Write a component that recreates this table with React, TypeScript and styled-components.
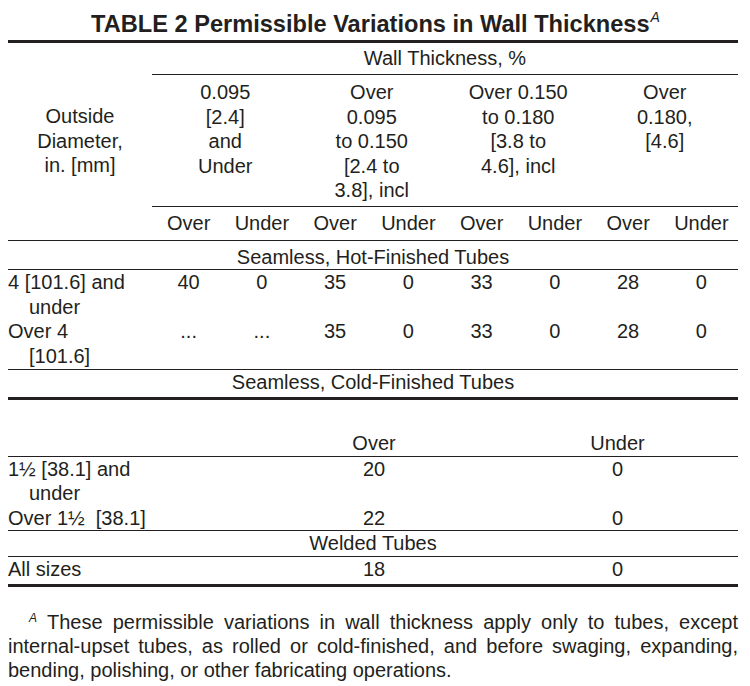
import React from "react";
import styled, { createGlobalStyle } from "styled-components";

const INK = "#231f20";

const Global = createGlobalStyle`
  html, body { margin: 0; padding: 0; background: #fff; }
  body { font-family: "Liberation Sans", Arial, Helvetica, sans-serif; }
`;

const Page = styled.div`
  width: 750px;
  height: 686px;
  box-sizing: border-box;
  padding: 0 12px 0 8px;
  background: #fff;
  color: ${INK};
  font-family: "Liberation Sans", Arial, Helvetica, sans-serif;
  font-size: 20px;
  line-height: 24.5px;
  overflow: hidden;
`;

const Title = styled.h1`
  margin: 0;
  height: 40px;
  box-sizing: border-box;
  padding: 10px 0 0 5px;
  font-size: 23.6px;
  line-height: 28px;
  font-weight: bold;
  text-align: center;
  white-space: nowrap;
`;

const TitleMark = styled.i`
  font-weight: normal;
  font-size: 14px;
  line-height: 0;
  vertical-align: 10px;
  margin-left: 1px;
`;

type RuleProps = { $rule?: "thin" | "thick" | "none"; $pt?: number; $pb?: number };

const ruleCss = (r?: "thin" | "thick" | "none") =>
  r === "thick" ? `3px solid ${INK}` : r === "none" ? "none" : `1px solid ${INK}`;

const Table = styled.section`
  border-top: 3px solid ${INK};
`;

const WideGrid = styled.div<RuleProps>`
  display: grid;
  grid-template-columns: 144px repeat(8, 1fr);
  padding-top: ${(p) => p.$pt ?? 0}px;
  padding-bottom: ${(p) => p.$pb ?? 0}px;
  border-bottom: ${(p) => ruleCss(p.$rule)};
`;

const NarrowGrid = styled.div<RuleProps>`
  display: grid;
  grid-template-columns: 243px 246px 241px;
  padding-top: ${(p) => p.$pt ?? 0}px;
  padding-bottom: ${(p) => p.$pb ?? 0}px;
  border-bottom: ${(p) => ruleCss(p.$rule)};
`;

const SpanHead = styled.div`
  grid-column: 2 / -1;
  grid-row: 1;
  text-align: center;
  padding: 3px 0 3.5px;
  border-bottom: 1px solid ${INK};
`;

const DiameterHead = styled.div`
  grid-column: 1;
  grid-row: 2;
  align-self: center;
  text-align: center;
`;

const GroupHead = styled.div<{ $col: number }>`
  grid-row: 2;
  grid-column: ${(p) => p.$col} / span 2;
  text-align: center;
  padding: 5px 0 3.5px;
  border-bottom: 1px solid ${INK};
`;

const SubHead = styled.div<{ $col: number }>`
  grid-row: 3;
  grid-column: ${(p) => p.$col};
  text-align: center;
  padding: 4px 0 4.5px;
`;

const SectionTitle = styled.div<RuleProps>`
  text-align: center;
  padding-top: ${(p) => p.$pt ?? 0}px;
  padding-bottom: ${(p) => p.$pb ?? 0}px;
  border-bottom: ${(p) => ruleCss(p.$rule)};
`;

const Stub = styled.div`
  grid-column: 1;
  text-align: left;
  white-space: nowrap;
`;

const StubLine = styled.span<{ $cont?: boolean }>`
  display: block;
  padding-left: ${(p) => (p.$cont ? 21 : 0)}px;
`;

const Value = styled.div`
  text-align: center;
  white-space: nowrap;
`;

const ColHead = styled.div`
  text-align: center;
`;

const Footnote = styled.div`
  margin-top: 23px;
  line-height: 24px;
`;

const NoteLine = styled.div<{ $first?: boolean; $last?: boolean }>`
  text-align: justify;
  text-align-last: ${(p) => (p.$last ? "left" : "justify")};
  padding-left: ${(p) => (p.$first ? 21 : 0)}px;
  white-space: nowrap;
`;

const NoteMark = styled.i`
  font-size: 12px;
  line-height: 0;
  vertical-align: 7px;
  margin-right: 10px;
`;

const groups: { col: number; lines: string[] }[] = [
  { col: 2, lines: ["0.095", "[2.4]", "and", "Under"] },
  { col: 4, lines: ["Over", "0.095", "to 0.150", "[2.4 to", "3.8], incl"] },
  { col: 6, lines: ["Over 0.150", "to 0.180", "[3.8 to", "4.6], incl"] },
  { col: 8, lines: ["Over", "0.180,", "[4.6]"] },
];

const hotRows: { stub: string[]; values: string[] }[] = [
  { stub: ["4 [101.6] and", "under"], values: ["40", "0", "35", "0", "33", "0", "28", "0"] },
  { stub: ["Over 4", "[101.6]"], values: ["...", "...", "35", "0", "33", "0", "28", "0"] },
];

const coldRows: { stub: string[]; over: string; under: string }[] = [
  { stub: ["1\u00bd [38.1] and", "under"], over: "20", under: "0" },
  { stub: ["Over 1\u00bd\u00a0 [38.1]"], over: "22", under: "0" },
];

const Lines: React.FC<{ lines: string[] }> = ({ lines }) => (
  <>
    {lines.map((l, i) => (
      <React.Fragment key={i}>
        {i > 0 && <br />}
        {l}
      </React.Fragment>
    ))}
  </>
);

const StubText: React.FC<{ lines: string[] }> = ({ lines }) => (
  <Stub>
    {lines.map((l, i) => (
      <StubLine key={i} $cont={i > 0}>
        {l}
      </StubLine>
    ))}
  </Stub>
);

export default function App() {
  return (
    <>
      <Global />
      <Page>
        <Title>
          TABLE 2 Permissible Variations in Wall Thickness<TitleMark>A</TitleMark>
        </Title>

        <Table>
          <WideGrid $rule="thin">
            <SpanHead>Wall Thickness, %</SpanHead>
            <DiameterHead>
              <Lines lines={["Outside", "Diameter,", "in. [mm]"]} />
            </DiameterHead>
            {groups.map((g) => (
              <GroupHead key={g.col} $col={g.col}>
                <Lines lines={g.lines} />
              </GroupHead>
            ))}
            {Array.from({ length: 8 }).map((_, i) => (
              <SubHead key={i} $col={i + 2}>
                {i % 2 === 0 ? "Over" : "Under"}
              </SubHead>
            ))}
          </WideGrid>

          <SectionTitle $pt={3.5} $rule="thin">
            Seamless, Hot-Finished Tubes
          </SectionTitle>

          <WideGrid $pb={1} $rule="thin">
            {hotRows.map((r, ri) => (
              <React.Fragment key={ri}>
                <StubText lines={r.stub} />
                {r.values.map((v, vi) => (
                  <Value key={vi}>{v}</Value>
                ))}
              </React.Fragment>
            ))}
          </WideGrid>

          <SectionTitle $pb={2.5} $rule="thick">
            Seamless, Cold-Finished Tubes
          </SectionTitle>

          <NarrowGrid $pt={31} $rule="thin">
            <div />
            <ColHead>Over</ColHead>
            <ColHead>Under</ColHead>
          </NarrowGrid>

          <NarrowGrid $rule="thin">
            {coldRows.map((r, ri) => (
              <React.Fragment key={ri}>
                <StubText lines={r.stub} />
                <Value>{r.over}</Value>
                <Value>{r.under}</Value>
              </React.Fragment>
            ))}
          </NarrowGrid>

          <SectionTitle $rule="thin">Welded Tubes</SectionTitle>

          <NarrowGrid $pb={3} $rule="thick">
            <StubText lines={["All sizes"]} />
            <Value>18</Value>
            <Value>0</Value>
          </NarrowGrid>
        </Table>

        <Footnote>
          <NoteLine $first>
            <NoteMark>A</NoteMark>These permissible variations in wall thickness apply only to tubes, except
          </NoteLine>
          <NoteLine>internal-upset tubes, as rolled or cold-finished, and before swaging, expanding,</NoteLine>
          <NoteLine $last>bending, polishing, or other fabricating operations.</NoteLine>
        </Footnote>
      </Page>
    </>
  );
}
